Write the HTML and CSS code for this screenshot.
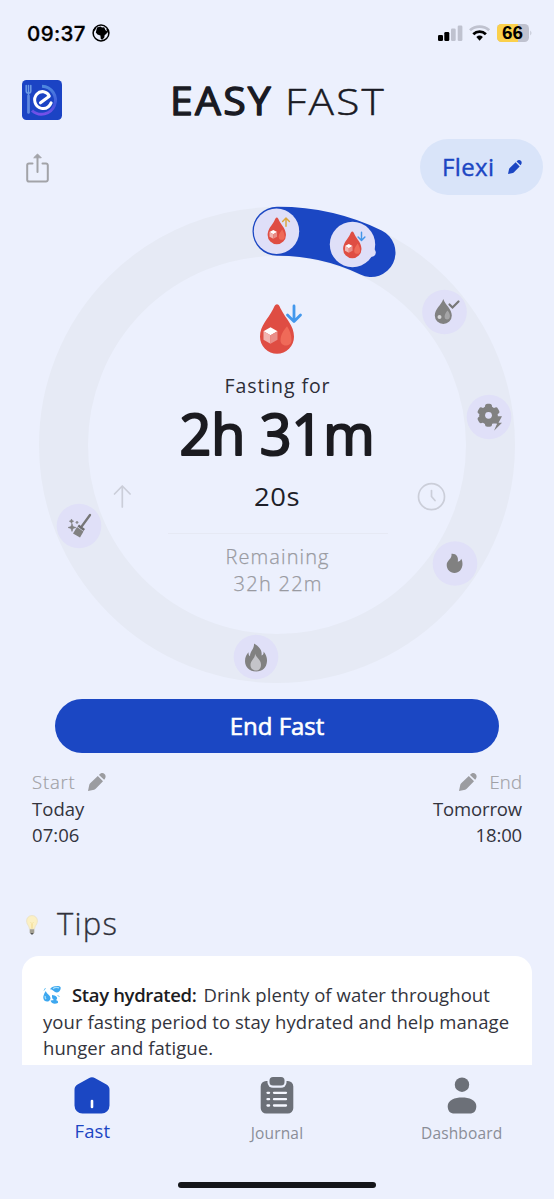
FILE: index.html
```
<!DOCTYPE html>
<html lang="en">
<head>
<meta charset="utf-8">
<title>Easy Fast</title>
<link rel="stylesheet" href="styles.css">
</head>
<body>
<div class="phone">
  <header class="status">
    <span class="clock">09:37</span>
    <svg class="globe" width="18" height="18" viewBox="0 0 18 18"><circle cx="9" cy="9" r="7.900" fill="#ecf0fd" stroke="#000" stroke-width="1.500"/><path d="M5 3.500 8.500 2.600l1.500 1 2.200-.3 1.300 3 2 1.200-1.200 2.500-1.600 1-.4 2.400-2 2.300-1.500-.7-.4-3.500L5.500 10.500 3.800 8.500Z" fill="#000"/><path d="M1.800 6.500 3.500 4M15 5l1.500 4" stroke="#000" fill="none" stroke-width="1.500"/></svg>
    <svg class="signals" width="96" height="20" viewBox="0 0 96 20">
      <rect x="1" y="11" width="5" height="6" rx="1.3"/><rect x="7.3" y="8" width="5" height="9" rx="1.3"/>
      <rect x="14" y="4.5" width="4.7" height="12.5" rx="1.3" fill="#bfc2cf"/><rect x="20.7" y="1.5" width="4.7" height="15.5" rx="1.3" fill="#bfc2cf"/>
      <g fill="none" stroke-width="2.8"><path d="M33 6.200a14.500 14.500 0 0 1 19.200 0" stroke="#bfc2cf"/><path d="M36.300 10.200a9.200 9.200 0 0 1 12.600 0" stroke="#000"/></g>
      <path d="m39.300 12.900 3.300 3.800 3.300-3.800a5 5 0 0 0-6.600 0Z"/>
      <rect x="60" y="0" width="32" height="18" rx="4.500" fill="#bfc2cf"/><path d="M64.500 0H81v18H64.500a4.500 4.500 0 0 1-4.500-4.500v-9A4.500 4.500 0 0 1 64.500 0Z" fill="#fbd04b"/><path d="M93.300 6.500q2.300 2.500 0 5Z" fill="#bfc2cf"/>
      <text x="65" y="15.100" class="battery" textLength="21" lengthAdjust="spacingAndGlyphs">66</text>
    </svg>
  </header>

  <div class="brand">
    <svg width="40" height="40" viewBox="0 0 40 40">
      <defs><linearGradient id="arc" x1="0" y1="0" x2="0" y2="1"><stop offset="0" stop-color="#4e88df"/><stop offset=".65" stop-color="#3f55db"/><stop offset="1" stop-color="#7650e9"/></linearGradient></defs>
      <rect width="40" height="40" rx="4.500" fill="#1b43c4"/>
      <path d="M20 6.200A14 14 0 1 1 10 30.500" fill="none" stroke="url(#arc)" stroke-width="3"/>
      <path d="M4.200 5.500v5.500a2.200 2.200 0 0 0 4.600 0V5.500M6.500 5.500v27" fill="none" stroke="#6c9be5" stroke-width="1.500" stroke-linecap="round"/><path d="M6.500 16v16.500" stroke="#6189df" stroke-width="2.600" stroke-linecap="round"/>
      <path d="M18.500 22.800 27.300 16.200C25.200 11.200 18.500 10 14.800 14.200c-4 4.500-2.300 12.500 4.500 14.200 4.300.8 8-1.200 9.800-5.500" fill="none" stroke="#fff" stroke-width="3" stroke-linecap="round" stroke-linejoin="round"/>
    </svg>
    <svg class="wordmark" width="224" height="60" viewBox="0 -10 224 60"><text x="1" y="33.500" class="word-bold" textLength="103" lengthAdjust="spacingAndGlyphs">EASY</text><text x="116" y="33.500" class="word-light" textLength="101" lengthAdjust="spacingAndGlyphs">FAST</text></svg>
  </div>

  <div class="actions">
    <svg width="24" height="31" viewBox="0 0 24 31" fill="none" stroke="#a2a3a8" stroke-width="2" stroke-linecap="round" stroke-linejoin="round"><path d="M6.500 10.500H3a1.800 1.800 0 0 0-1.800 1.800v14.500A1.800 1.800 0 0 0 3 28.600h17a1.800 1.800 0 0 0 1.800-1.800V12.300a1.800 1.800 0 0 0-1.800-1.800h-3.500M11.500 19V3"/><path d="m8 4.500 3.500-3.500L15 4.500Z" fill="#a2a3a8" stroke-width="1"/></svg>
    <div class="plan"><span>Flexi</span><svg width="14" height="14" viewBox="0 0 18 18" fill="#1c46c3"><path d="M0 18l1.300-6.200Q1.500 11 2.200 10.300L9.800 3l5.200 5.200-7.300 7.600Q7 16.500 6.200 16.700ZM11 1.900C13-.3 15-.4 16.500 1s1.600 3.500-.4 5.800Z"/></svg></div>
  </div>

  <svg class="dial" width="554" height="486" viewBox="0 202 554 486">
    <defs>
      <g id="drop"><path d="M0-25C-2-25-3-22-4-20-9-10-17-4-17 7.500a17 17 0 0 0 34 0C17-4 9-10 4-20 3-22 2-25 0-25Z" fill="#df4d43"/><path d="M10-3C7 1 3.500 5 3.500 11c0 7 11 7 11 0C14.500 5 12.500 1 10-3Z" fill="#ef6a58"/><path d="m-13.500 2 7-4 7 4-7 4Z" fill="#fff"/><path d="m-13.500 2 7 4v8.500l-7-4Z" fill="#f1b4b0"/><path d="m.5 2-7 4v8.500l7-4Z" fill="#e98e88"/></g>
      <path id="arrow" d="M0-8V7M-6.500 1 0 7.500 6.500 1" fill="none" stroke-width="2.800" stroke-linecap="round" stroke-linejoin="round"/>
    </defs>
    <circle cx="277" cy="445" r="213.500" fill="none" stroke="#e6eaf5" stroke-width="49"/>
    <path d="M277 231.300A213.500 213.500 0 0 1 371 252.500" fill="none" stroke="#1b47c3" stroke-width="49" stroke-linecap="round"/>
    <g fill="#dfdff8"><circle cx="276.500" cy="231.300" r="22.700"/><circle cx="352.500" cy="244.500" r="22.700"/><circle cx="371.500" cy="252.500" r="4.300"/><g fill="#e0e0f8"><circle cx="444.500" cy="312" r="22.300"/><circle cx="489" cy="417" r="22.300"/><circle cx="455" cy="563.500" r="22.300"/><circle cx="256" cy="657" r="22.300"/><circle cx="79" cy="526" r="22.300"/></g></g>
    <use href="#drop" transform="translate(276.800 231) scale(.54)"/><use href="#arrow" transform="translate(286 222) scale(.52 -.52)" stroke="#dba63e"/>
    <use href="#drop" transform="translate(352.300 245) scale(.54)"/><use href="#arrow" transform="translate(361.500 236.500) scale(.52)" stroke="#4396e9"/>
    <use href="#drop" transform="translate(277 329.300)"/><use href="#arrow" transform="translate(294 314)" stroke="#4398ec"/>

    <g fill="#818181">
      <path d="M443.300 299c-2 6-8.500 10-8.500 16.500a8.500 8.500 0 0 0 17 0c0-6.500-6.500-10.500-8.500-16.500Z"/><path d="M447.500 310.500c-5 6-2.500 9-.5 9 3.500 0 4-5 .5-9Z" fill="#a5a5a7"/><circle cx="439.500" cy="317" r="2" fill="#d6d6d8"/><path d="m449.500 304.500 3 3 6-6" fill="none" stroke="#777" stroke-width="2.200" stroke-linecap="round"/>
      <g transform="translate(488.500 415.300)"><circle r="9.300"/><rect x="-3.500" y="-11.500" width="7" height="23" rx="2.500"/><rect x="-3.500" y="-11.500" width="7" height="23" rx="2.500" transform="rotate(60)"/><rect x="-3.500" y="-11.500" width="7" height="23" rx="2.500" transform="rotate(120)"/><circle r="3.400" fill="#dfdff8"/><path d="m8.500 1-4 7.500h4l-3 7L13.500 7.500H10L13.500 1Z"/><path d="M3.500 12 5 8.800H8.200" fill="none" stroke="#e0e0f8" stroke-width=".8"/></g>
      <path d="M451.500 553.800c4.500-.5 7.300 3 6.300 8 2-.5 3-1.500 3.300-3 1 1.400 1.400 3 1.400 5.200 0 5-3.500 9-8 9-4.600 0-7.800-3.700-7.800-8 0-5 5.500-5.500 4.800-11.200Z"/>
      <path d="M254 643.500c5 3 8.500 6.500 7.500 12 2-.8 2.300-2.500 2-4 2.500 3 3.700 6 3.500 9.500-.3 6.500-4.500 10.500-11 10.500s-11-4.500-11-10.500c0-4 1.500-6.500 3.500-8.800 0 2 .3 3 1.500 4 0-5 4.500-7 4-12.700Z"/><path d="M255 653.500c1 4 6 6 6 11 0 4-2 6-5 6-3.200 0-5.500-2.300-5.500-5.500 0-5 5-6.500 4.500-11.500Z" fill="#c4c4c9"/>
      <path d="m90 515-8 11" stroke="#777" stroke-width="2.300" stroke-linecap="round"/><path d="m79 524.500 6 4.500-1.500 2-6-4.500Z" fill="#6f6f70"/><path d="m77 527 6.500 4.500-3.500 6-7-4Z"/><path d="m72 523.500 1 3 3 1-3 1-1 3-1-3-3-1 3-1ZM71.500 519l.7 1.500 1.500.7-1.500.7-.7 1.500-.7-1.500-1.500-.7 1.500-.7ZM77 521l.4 1 1 .4-1 .4-.4 1-.4-1-1-.4 1-.4Z" stroke="#777" stroke-width=".5"/>
    </g>
    <g fill="none" stroke="#cbced9" stroke-width="1.700" stroke-linecap="round" stroke-linejoin="round"><path d="M122.300 507v-21M114.500 494l7.800-8 7.800 8"/><circle cx="431.500" cy="496.700" r="13"/><path d="M431.500 490.500v6l3.500 4"/></g>
    <path d="M168 533.500h220" stroke="#e6e9f4" stroke-width="1.200"/>
    <text x="224.500" y="393" class="dial-label" textLength="105">Fasting for</text>
    <text x="179.500" y="454.500" class="dial-time" textLength="195" lengthAdjust="spacingAndGlyphs">2h 31m</text>
    <text x="254" y="506" class="dial-seconds" textLength="46" lengthAdjust="spacingAndGlyphs">20s</text>
    <text x="225.500" y="564.300" class="dial-rest" textLength="103">Remaining</text>
    <text x="233.500" y="591" class="dial-rest" textLength="88">32h 22m</text>
  </svg>

  <button class="end-fast">End Fast</button>

  <div class="range">
    <div class="edge"><div class="caption"><span>Start</span><svg width="18" height="18" viewBox="0 0 18 18"><path d="M0 18l1.300-6.200Q1.500 11 2.200 10.300L9.800 3l5.200 5.200-7.300 7.600Q7 16.500 6.200 16.700ZM11 1.900C13-.3 15-.4 16.500 1s1.600 3.500-.4 5.800Z"/></svg></div><div>Today</div><div>07:06</div></div>
    <div class="edge right"><div class="caption"><svg width="18" height="18" viewBox="0 0 18 18"><path d="M0 18l1.300-6.200Q1.500 11 2.200 10.300L9.800 3l5.200 5.200-7.300 7.600Q7 16.500 6.200 16.700ZM11 1.900C13-.3 15-.4 16.500 1s1.600 3.500-.4 5.800Z"/></svg><span>End</span></div><div>Tomorrow</div><div>18:00</div></div>
  </div>

  <h2 class="tips-title"><svg width="12" height="20" viewBox="0 0 12 20"><path d="M6 .5A5.300 5.300 0 0 0 .6 6c0 3.500 2.500 4.500 2.900 8h5c.4-3.500 2.900-4.500 2.900-8A5.300 5.300 0 0 0 6 .5Z" fill="#fbf0c4" stroke="#e9dfc0" stroke-width=".7"/><path d="m4.500 7 1 1.500v5M7.500 7l-1 1.500v5" stroke="#f5df9c" fill="none" stroke-width=".8"/><path d="M3.700 14.200h4.600v3.500L7 19H5l-1.300-1.300Z" fill="#a3a093"/><path d="M4.500 18h3L6.800 19.500H5.200Z" fill="#555"/></svg><span>Tips</span></h2>

  <section class="tip">
    <p class="l1"><svg width="18" height="18" viewBox="0 0 18 18"><g fill="#3da7ef"><path d="M7 3.300C9-.3 16.500-.8 17.700 1.500 18 5 14.500 7.500 12 6 10 4.700 9.500 3.500 7 3.300Z"/><path d="M2.800 5C.8 8 .2 10 .3 12c.5 4.700 6.700 4.700 7.200.5C7.500 9 4 8.500 2.800 5Z"/><path d="M9 9c-.5 3.500 1.200 5.700 4 5 3-2.300-.5-4.800-4-5Z"/><path d="M7.500 14.500c1 3.500 4.500 4 7.300 2.500 1.500-3.500-4-3.500-7.300-2.500Z"/></g><path d="M10 2.700c2-1.500 4-1.500 6-.8M2.300 10c-.3 1.500 0 2.500.8 3" fill="none" stroke="#a8e0fb" stroke-width="1.300"/><path d="M1 4.500 2.500 2M14.500 9.500l2 1" stroke="#6cc5f5"/></svg><b>Stay hydrated:</b><span>Drink plenty of water throughout</span></p>
    <p>your fasting period to stay hydrated and help manage</p>
    <p>hunger and fatigue.</p>
  </section>

  <nav class="tabs">
    <div class="tab active"><svg width="36" height="37" viewBox="0 0 36 37"><path d="M14.800 1.200a6.500 6.500 0 0 1 6.400 0l11.300 6.300A6 6 0 0 1 35.500 12.700V28.500A8 8 0 0 1 27.500 36.500h-19a8 8 0 0 1-8-8V12.700a6 6 0 0 1 3-5.200Z" fill="#1b47c3"/><path d="M18 24v6" stroke="#fff" stroke-width="2.600" stroke-linecap="round"/></svg><span>Fast</span></div>
    <div class="tab journal"><svg width="34" height="37" viewBox="0 0 34 37"><rect x=".7" y="4" width="32.600" height="32.500" rx="5.500" fill="#6c7078"/><rect x="7.500" y="-2" width="19" height="12.800" rx="5.500" fill="#ecf0fd"/><rect x="9.500" y="0" width="15" height="8.500" rx="3.500" fill="#6c7078"/><g stroke="#f5f7ff" stroke-width="2.300" stroke-linecap="round"><path d="M7.500 15.800h1.600M14 15.800h12M7.500 22.200h1.600M14 22.200h12M7.500 28.500h1.600M14 28.500h12"/></g></svg><span>Journal</span></div>
    <div class="tab dashboard"><svg width="30" height="37" viewBox="0 0 30 37" fill="#6c7078"><circle cx="15" cy="7.700" r="7.200"/><path d="M.7 29C.7 23 8 20.500 15 20.500S29.300 23 29.300 29c0 5-2.300 7.500-6.800 7.500h-15C3 36.500.7 34 .7 29Z"/></svg><span>Dashboard</span></div>
  </nav>
  <div class="home-bar"></div>
</div>
</body>
</html>
```
FILE: styles.css
```
* { box-sizing: border-box; }
body { margin: 0; background: #ecf0fd; font-family: "Open Sans", sans-serif; color: #33343d; }
.phone { width: 554px; height: 1199px; overflow: hidden; display: flex; flex-direction: column; }
svg { display: block; flex: none; }
.status { height: 80px; padding: 24px 21px 0 27px; display: flex; align-items: flex-start; flex: none; }
.clock { font: 550 20.5px/19px Inter, sans-serif; color: #000; width: 65px; white-space: nowrap; letter-spacing: .4px; -webkit-text-stroke: .3px #000; }
.signals { margin-left: auto; }
.battery { font: 700 17.5px "Liberation Sans", sans-serif; }
.brand { height: 59px; padding-left: 22px; display: flex; align-items: flex-start; flex: none; }
.wordmark { margin: -9px 0 0 107px; }
.word-bold, .word-light { font-size: 37.5px; fill: #191a23; stroke: #191a23; stroke-linejoin: round; letter-spacing: 2px; }
.word-bold { font-weight: 400; stroke-width: 1.3px; }
.word-light { font-weight: 300; stroke-width: .5px; }
.actions { height: 63px; flex: none; display: flex; justify-content: space-between; align-items: flex-start; padding: 0 11px 0 26px; }
.actions > svg { margin-top: 14px; }
.plan { width: 123px; height: 56px; border-radius: 28px; background: #d9e4f9; color: #1c46c3; display: flex; align-items: center; gap: 13px; padding-left: 22px; font-size: 24px; font-weight: 400; letter-spacing: .4px; -webkit-text-stroke: .4px #1c46c3; }
.plan span { margin-top: -1px; }
.dial { flex: none; }
.dial-label { font-size: 19.5px; fill: #2d2e38; font-weight: 400; }
.dial-time { font-size: 56px; font-weight: 500; fill: #1b1b20; stroke: #1b1b20; stroke-width: 2.2px; stroke-linejoin: round; }
.dial-seconds { font-size: 26px; font-weight: 400; fill: #1e1f29; letter-spacing: .5px; }
.dial-rest { font-size: 20px; font-weight: 300; fill: #999aa1; stroke: #999aa1; stroke-width: .25px; }
.end-fast { margin: 11px 0 0 55px; width: 444px; height: 54px; flex: none; border: 0; border-radius: 27px; background: #1b47c3; color: #fff; font: 400 24px/54px "Open Sans", sans-serif; padding: 0; letter-spacing: 0; -webkit-text-stroke: .6px #fff; }
.range { display: flex; justify-content: space-between; padding: 16px 32px 0; height: 137px; flex: none; font-size: 18.5px; line-height: 26.7px; font-weight: 400; letter-spacing: .05px; }
.right { text-align: right; letter-spacing: -.15px; }
.caption { display: flex; align-items: center; gap: 13px; color: #9fa0a5; font-weight: 300; letter-spacing: .8px; -webkit-text-stroke: .2px #9fa0a5; }
.caption svg { fill: #9b9ca0; }
.right .caption { justify-content: flex-end; letter-spacing: .1px; }
.tips-title { margin: 0; height: 66px; padding: 11px 0 0 26px; display: flex; align-items: flex-start; gap: 19px; font-size: 31px; line-height: 44px; font-weight: 300; letter-spacing: 1.3px; flex: none; -webkit-text-stroke: .3px #2a2b34; }
.tips-title svg { margin-top: 14px; }
.tip { margin: 0 22px; height: 109px; padding: 26px 21px 0; background: #fff; border-radius: 17px 17px 0 0; flex: none; font-size: 18.5px; line-height: 26.7px; font-weight: 400; letter-spacing: .06px; white-space: nowrap; }
.tip p { margin: 0; }
.l1 { display: flex; align-items: center; }
.l1 b { margin: 0 7px 0 11px; font-weight: 600; letter-spacing: -.35px; color: #1c1c22; }
.tabs { display: grid; grid-template-columns: repeat(3, 1fr); height: 117px; flex: none; padding-top: 12px; }
.tab { display: flex; flex-direction: column; align-items: center; color: #8a8d97; font-size: 15.5px; line-height: 24px; font-weight: 400; letter-spacing: .15px; }
.tab span { margin-top: 7px; }
.active { color: #1c46c3; font-size: 18.5px; letter-spacing: .1px; }
.active span { margin-top: 5px; }
.home-bar { width: 198px; height: 6px; border-radius: 3px; background: #15161a; align-self: center; flex: none; }
```
